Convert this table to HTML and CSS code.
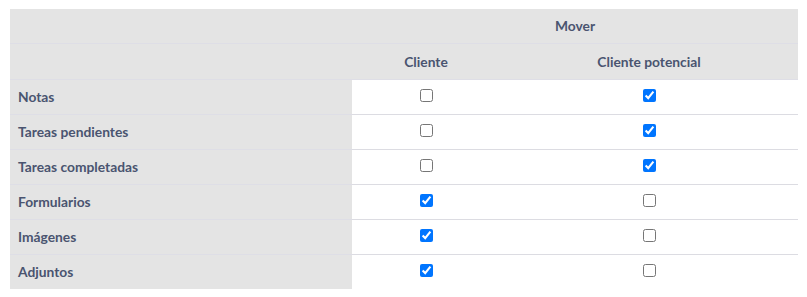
FILE: index.html
```html
<!DOCTYPE html>
<html lang="es">
<head>
<meta charset="utf-8">
<title>Mover</title>
<link rel="stylesheet" href="styles.css">
</head>
<body>
<table class="perm-table">
  <colgroup>
    <col class="col-label">
    <col class="col-a">
    <col class="col-b">
  </colgroup>
  <thead>
    <tr>
      <th class="label-col"></th>
      <th colspan="2" class="group-head">Mover</th>
    </tr>
    <tr>
      <th class="label-col"></th>
      <th>Cliente</th>
      <th>Cliente potencial</th>
    </tr>
  </thead>
  <tbody>
    <tr><th class="label-col">Notas</th><td><input type="checkbox"></td><td><input type="checkbox" checked></td></tr>
    <tr><th class="label-col">Tareas pendientes</th><td><input type="checkbox"></td><td><input type="checkbox" checked></td></tr>
    <tr><th class="label-col">Tareas completadas</th><td><input type="checkbox"></td><td><input type="checkbox" checked></td></tr>
    <tr><th class="label-col">Formularios</th><td><input type="checkbox" checked></td><td><input type="checkbox"></td></tr>
    <tr><th class="label-col">Imágenes</th><td><input type="checkbox" checked></td><td><input type="checkbox"></td></tr>
    <tr><th class="label-col">Adjuntos</th><td><input type="checkbox" checked></td><td><input type="checkbox"></td></tr>
  </tbody>
</table>
</body>
</html>
```
FILE: styles.css
```css
html, body {
  margin: 0;
  background: #ffffff;
}

body {
  padding: 9px 9px 0 10px;
  font-family: Lato, "Noto Sans", sans-serif;
  font-size: 13.8px;
  color: #4a5470;
}

.perm-table {
  width: 788px;
  border-collapse: collapse;
  table-layout: fixed;
}

.col-label { width: 342px; }
.col-a { width: 148px; }
.col-b { width: 298px; }

.perm-table th,
.perm-table td {
  height: 34px;
  padding: 0 8px;
  border-bottom: 1px solid #dcdce2;
  vertical-align: middle;
  line-height: 18px;
}

.perm-table thead th {
  background: #e4e4e4;
  font-weight: 700;
  text-align: center;
  border-bottom-color: #dedee6;
}

.perm-table thead tr:last-child th {
  height: 35px;
}

.perm-table .label-col {
  background: #e4e4e4;
  text-align: left;
  font-weight: 700;
  border-bottom-color: #dedee6;
}

.perm-table tbody tr:last-child th,
.perm-table tbody tr:last-child td {
  border-bottom: none;
}

.perm-table td {
  text-align: center;
  background: #ffffff;
}

.perm-table input[type="checkbox"] {
  display: block;
  margin: -4px auto 0;
  width: 13px;
  height: 13px;
}
```
